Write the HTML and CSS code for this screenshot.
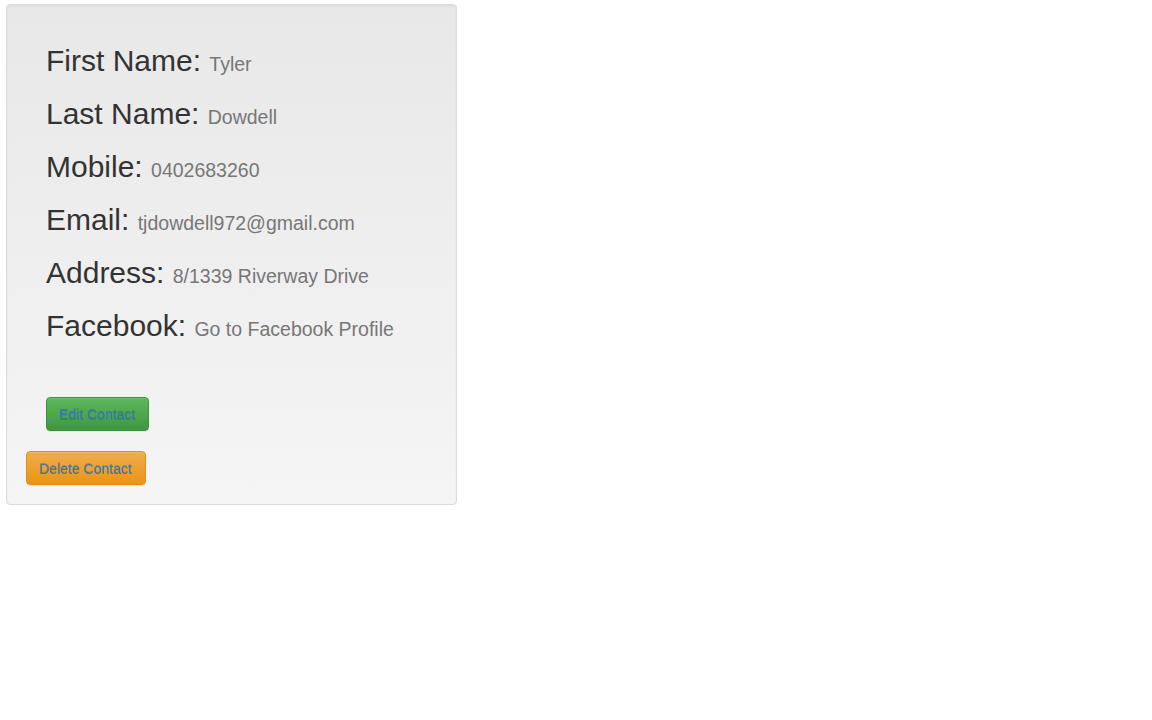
FILE: index.html
```html
<!DOCTYPE html>
<html>
<head>
<meta charset="utf-8">
<link rel="stylesheet" href="styles.css">
</head>
<body>
<div class="page">
  <div class="well">
    <div class="details">
      <h2 class="field">First Name: <small>Tyler</small></h2>
      <h2 class="field">Last Name: <small>Dowdell</small></h2>
      <h2 class="field">Mobile: <small>0402683260</small></h2>
      <h2 class="field">Email: <small>tjdowdell972@gmail.com</small></h2>
      <h2 class="field">Address: <small>8/1339 Riverway Drive</small></h2>
      <h2 class="field">Facebook: <small>Go to Facebook Profile</small></h2>
      <div class="edit-row"><a class="btn btn-success">Edit Contact</a></div>
    </div>
    <div class="delete-row"><a class="btn btn-warning">Delete Contact</a></div>
  </div>
</div>
</body>
</html>
```

FILE: styles.css
```css
* { box-sizing: border-box; }
html, body { margin: 0; padding: 0; background: #fff; }
body {
  font-family: "Liberation Sans", Arial, Helvetica, sans-serif;
  font-size: 14px;
  line-height: 1.42857;
  color: #333;
}
.page { padding: 4px 0 0 6px; }
.well {
  width: 451px;
  padding: 19px;
  border: 1px solid #dcdcdc;
  border-radius: 4px;
  background-image: linear-gradient(to bottom, #e8e8e8 0, #f5f5f5 100%);
  box-shadow: inset 0 1px 3px rgba(0,0,0,.05), 0 1px 0 rgba(255,255,255,.1);
}
.details { padding: 0 20px; }
.field {
  font-family: "Liberation Sans", Arial, sans-serif;
  font-size: 30px;
  font-weight: 500;
  line-height: 1.1;
  color: #333;
  margin: 20px 0 20px;
}
.field small {
  font-size: 65%;
  font-weight: 400;
  line-height: 1;
  color: #777;
}
.edit-row { padding-top: 35px; }
.delete-row { margin-top: 20px; }
.btn {
  display: inline-block;
  padding: 7px 13px 5px 12px;
  font-size: 14px;
  line-height: 20px;
  border: 1px solid transparent;
  border-radius: 4px;
  color: #337ab7;
  text-decoration: none;
  text-shadow: 0 -1px 0 rgba(0,0,0,.2);
  box-shadow: inset 0 1px 0 rgba(255,255,255,.15), 0 1px 1px rgba(0,0,0,.075);
  cursor: pointer;
}
.btn-success {
  background-image: linear-gradient(to bottom, #5cb85c 0, #419641 100%);
  border-color: #3e8f3e;
}
.btn-warning {
  background-image: linear-gradient(to bottom, #f0ad4e 0, #eb9316 100%);
  border-color: #e38d13;
}
```
